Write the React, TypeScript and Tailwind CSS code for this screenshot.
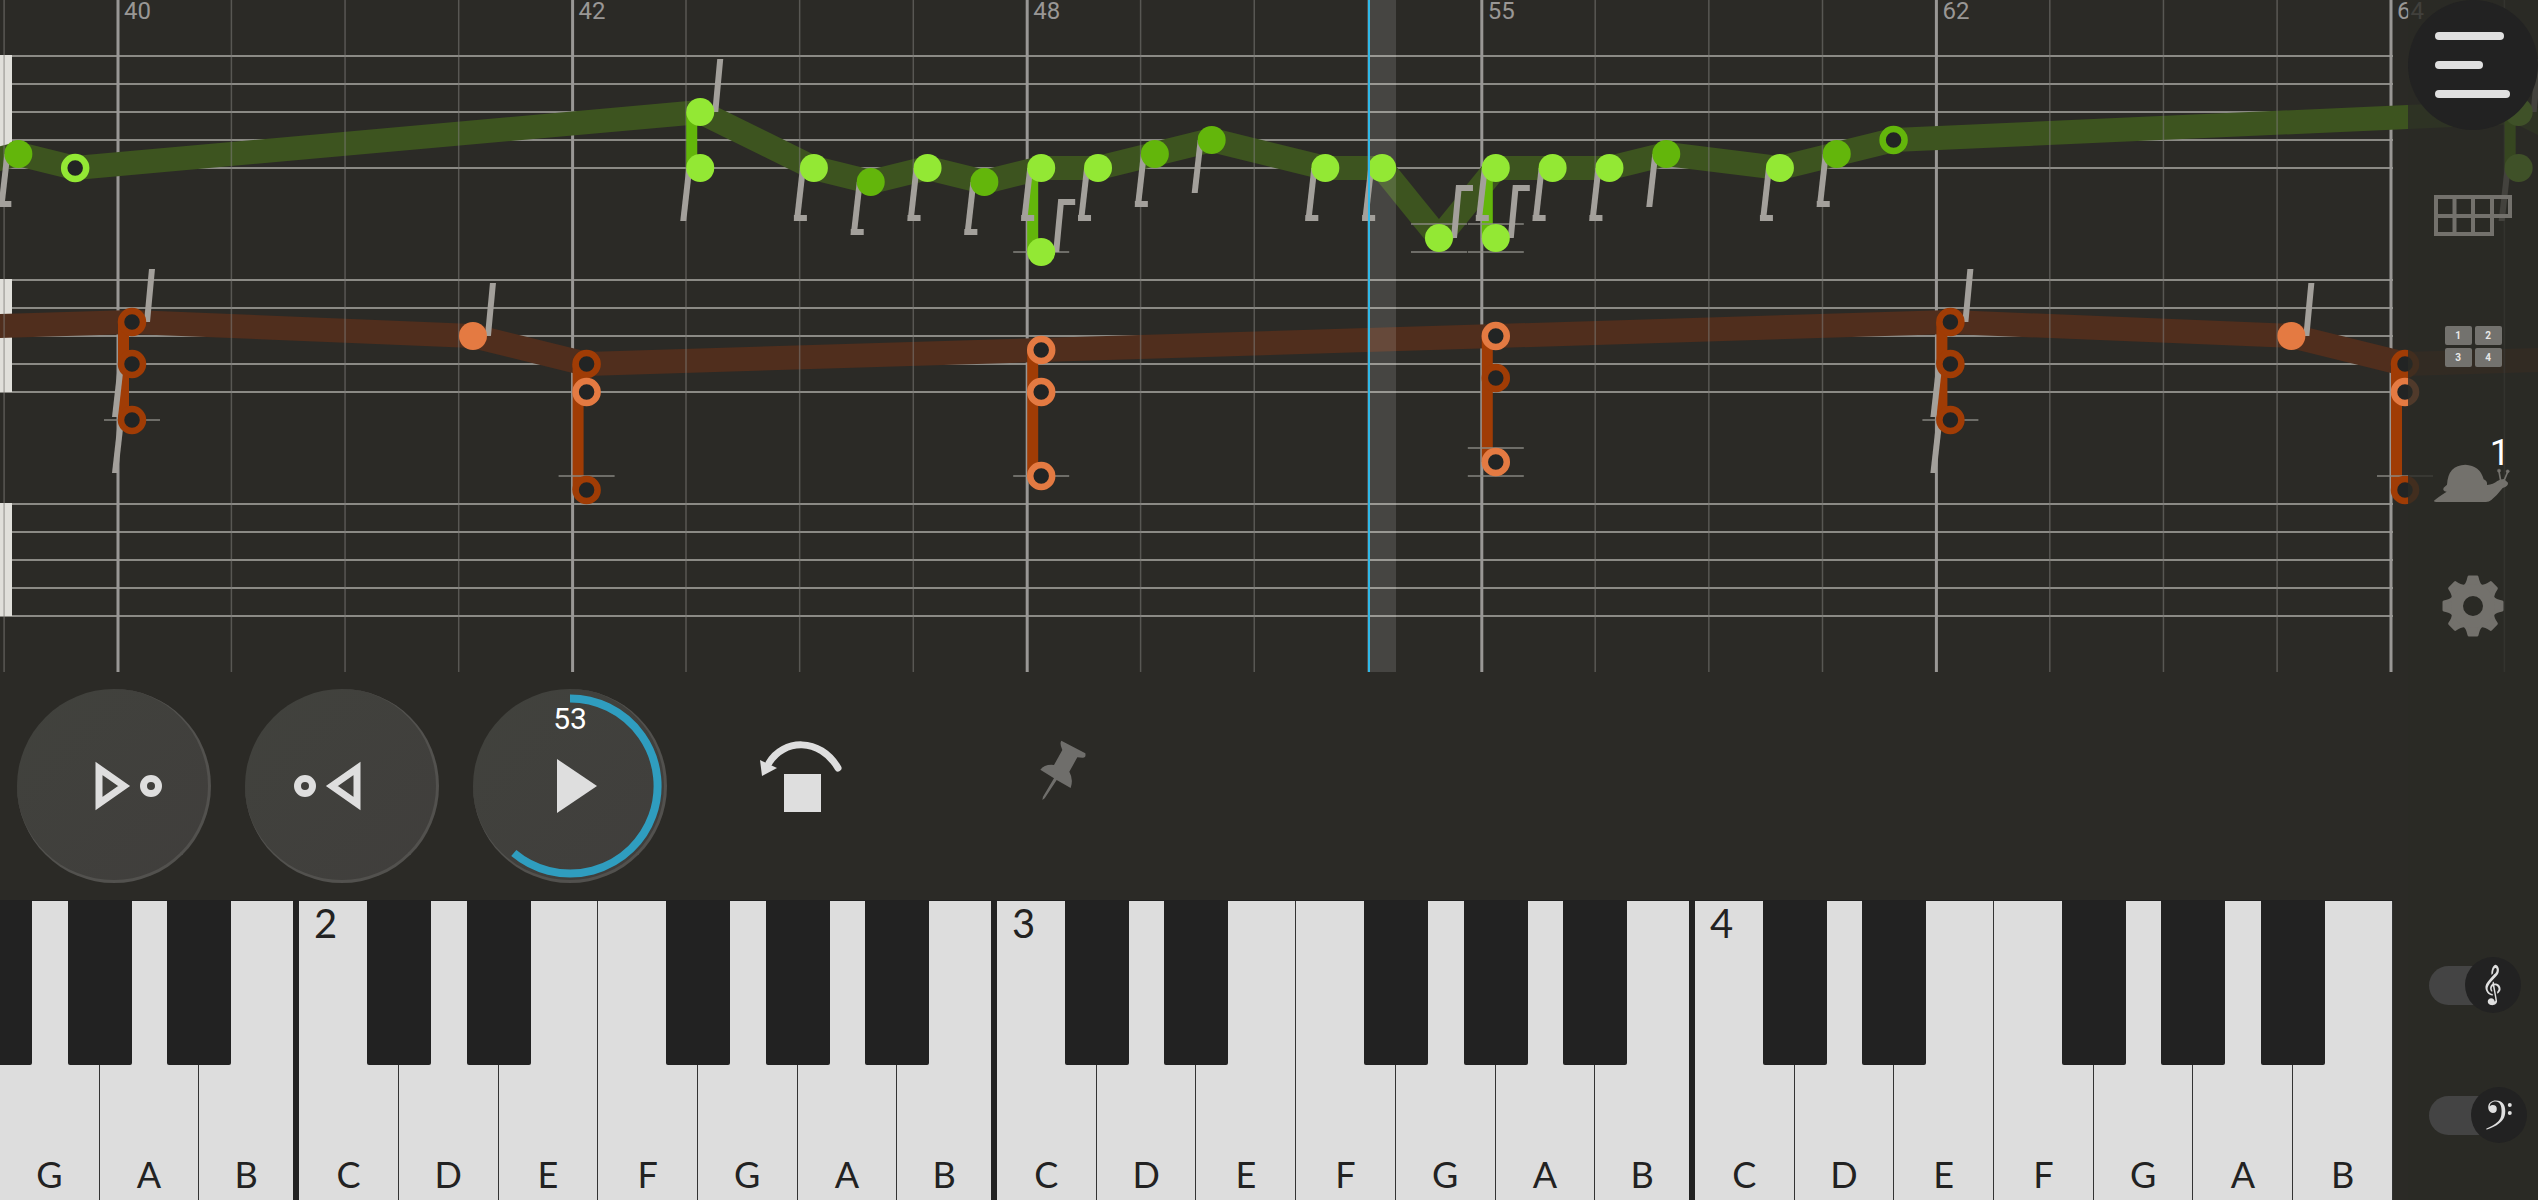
/**
 * Practice view
 *
 * Three stacked parts: the scrolling score, the transport bar and the
 * piano keyboard. The tool sidebar lies half transparent over the right edge.
 */

import { useState } from "react";
import { GiFClef, GiGClef } from "react-icons/gi";

const SCORE_HEIGHT = 672;
const FIRST_BAR = 118;
const BEAT = 113.65;
const STAFF_END = 2393;
const PLAYHEAD = 1369;

// First line of every staff, the lines are 28px apart
const STAVES = [56, 280, 504];
const STAFF_LINES = [0, 28, 56, 84, 112];

const BARS = [
  { beat: 0, label: "40" },
  { beat: 4, label: "42" },
  { beat: 8, label: "48" },
  { beat: 12, label: "55" },
  { beat: 16, label: "62" },
  { beat: 20, label: "64" },
];
const BEATS = [-1, 1, 2, 3, 5, 6, 7, 9, 10, 11, 13, 14, 15, 17, 18, 19, 21];

type Stem = "up" | "down" | "upFlag" | "downFlag";
type Note = { y: number; dark?: boolean; hollow?: boolean; stem?: Stem };
type Chord = { beat: number; notes: Note[]; ledgers?: number[] };

const GREEN = { light: "#93e834", dark: "#63b60b", ribbon: "#3d541f" };
const ORANGE = { light: "#e47a42", dark: "#a03c05", ribbon: "#502e1d" };

const RIGHT_HAND: Chord[] = [
  { beat: -1.5, notes: [{ y: 168 }] },
  { beat: -1, notes: [{ y: 154, dark: true, stem: "downFlag" }] },
  { beat: -0.5, notes: [{ y: 168, hollow: true }] },
  { beat: 5, notes: [{ y: 112, stem: "up" }, { y: 168, stem: "down" }] },
  { beat: 6, notes: [{ y: 168, stem: "downFlag" }] },
  { beat: 6.5, notes: [{ y: 182, dark: true, stem: "downFlag" }] },
  { beat: 7, notes: [{ y: 168, stem: "downFlag" }] },
  { beat: 7.5, notes: [{ y: 182, dark: true, stem: "downFlag" }] },
  { beat: 8, notes: [{ y: 168, stem: "downFlag" }, { y: 252, stem: "upFlag" }], ledgers: [252] },
  { beat: 8.5, notes: [{ y: 168, stem: "downFlag" }] },
  { beat: 9, notes: [{ y: 154, dark: true, stem: "downFlag" }] },
  { beat: 9.5, notes: [{ y: 140, dark: true, stem: "down" }] },
  { beat: 10.5, notes: [{ y: 168, stem: "downFlag" }] },
  { beat: 11, notes: [{ y: 168, stem: "downFlag" }] },
  { beat: 11.5, notes: [{ y: 238, stem: "upFlag" }], ledgers: [224, 252] },
  { beat: 12, notes: [{ y: 168, stem: "downFlag" }, { y: 238, stem: "upFlag" }], ledgers: [224, 252] },
  { beat: 12.5, notes: [{ y: 168, stem: "downFlag" }] },
  { beat: 13, notes: [{ y: 168, stem: "downFlag" }] },
  { beat: 13.5, notes: [{ y: 154, dark: true, stem: "down" }] },
  { beat: 14.5, notes: [{ y: 168, stem: "downFlag" }] },
  { beat: 15, notes: [{ y: 154, dark: true, stem: "downFlag" }] },
  { beat: 15.5, notes: [{ y: 140, dark: true, hollow: true }] },
  { beat: 21, notes: [{ y: 112, stem: "up" }, { y: 168, stem: "down" }] },
  { beat: 22, notes: [{ y: 168 }] },
];

const LEFT_HAND: Chord[] = [
  { beat: -4, notes: [{ y: 336 }] },
  {
    beat: 0,
    notes: [
      { y: 322, dark: true, hollow: true, stem: "up" },
      { y: 364, dark: true, hollow: true, stem: "down" },
      { y: 420, dark: true, hollow: true, stem: "down" },
    ],
    ledgers: [420],
  },
  { beat: 3, notes: [{ y: 336, stem: "up" }] },
  {
    beat: 4,
    notes: [
      { y: 364, dark: true, hollow: true },
      { y: 392, hollow: true },
      { y: 490, dark: true, hollow: true },
    ],
    ledgers: [476],
  },
  {
    beat: 8,
    notes: [
      { y: 350, hollow: true },
      { y: 392, hollow: true },
      { y: 476, hollow: true },
    ],
    ledgers: [476],
  },
  {
    beat: 12,
    notes: [
      { y: 336, hollow: true },
      { y: 378, dark: true, hollow: true },
      { y: 462, hollow: true },
    ],
    ledgers: [448, 476],
  },
  {
    beat: 16,
    notes: [
      { y: 322, dark: true, hollow: true, stem: "up" },
      { y: 364, dark: true, hollow: true, stem: "down" },
      { y: 420, dark: true, hollow: true, stem: "down" },
    ],
    ledgers: [420],
  },
  { beat: 19, notes: [{ y: 336, stem: "up" }] },
  {
    beat: 20,
    notes: [
      { y: 364, dark: true, hollow: true },
      { y: 392, hollow: true },
      { y: 490, dark: true, hollow: true },
    ],
    ledgers: [476],
  },
  { beat: 24, notes: [{ y: 350 }] },
];

const lineX = (beat: number) => FIRST_BAR + beat * BEAT;
const noteX = (beat: number) => lineX(beat) + 14;

// The wide band that follows the top voice
function Ribbon({ chords, color }: { chords: Chord[]; color: string }) {
  return (
    <g stroke={color} strokeWidth={24}>
      {chords.slice(1).map((chord, i) => (
        <line
          key={chord.beat}
          x1={noteX(chords[i].beat)}
          y1={chords[i].notes[0].y}
          x2={noteX(chord.beat)}
          y2={chord.notes[0].y}
        />
      ))}
    </g>
  );
}

function StemShape({ x, y, stem }: { x: number; y: number; stem: Stem }) {
  if (stem === "up" || stem === "upFlag") {
    return (
      <g fill="#a3a09b">
        <path d={`M${x + 12} ${y}h6l5 -53h-6z`} />
        {stem === "upFlag" && <rect x={x + 18} y={y - 53} width={16} height={6} />}
      </g>
    );
  }
  return (
    <g fill="#a3a09b">
      <path d={`M${x - 14} ${y}h6l-6 53h-6z`} />
      {stem === "downFlag" && <rect x={x - 20} y={y + 47} width={13} height={6} />}
    </g>
  );
}

function Voice({ chords, colors }: { chords: Chord[]; colors: typeof GREEN }) {
  return (
    <>
      {chords.map(({ beat, notes, ledgers = [] }) => {
        const x = noteX(beat);
        const top = notes[0].y;
        const bottom = notes[notes.length - 1].y;
        return (
          <g key={beat}>
            {notes.length > 1 && (
              <path d={`M${x - 14} ${top}h11v${bottom - top}h-11z`} fill={colors.dark} />
            )}
            {ledgers.map((y) => (
              <rect key={y} x={x - 28} y={y - 1} width={56} height={2} fill="#8b8a85" opacity={0.7} />
            ))}
            {notes.map((n) => n.stem && <StemShape key={n.y} x={x} y={n.y} stem={n.stem} />)}
            {notes.map((n) => {
              const color = n.dark ? colors.dark : colors.light;
              return n.hollow ? (
                <circle key={n.y} cx={x} cy={n.y} r={11} fill="#222424" stroke={color} strokeWidth={6.5} />
              ) : (
                <circle key={n.y} cx={x} cy={n.y} r={14} fill={color} />
              );
            })}
          </g>
        );
      })}
    </>
  );
}

function Score() {
  return (
    <svg className="block h-[672px] w-full shrink-0" role="img" aria-label="Score">
      {STAVES.map((top) => (
        <g key={top}>
          {STAFF_LINES.map((dy) => (
            <rect key={dy} x={0} y={top + dy - 1} width={STAFF_END} height={2} fill="#8b8a85" />
          ))}
          <rect x={0} y={top - 1} width={12} height={113} fill="#e0dfda" />
        </g>
      ))}

      {BARS.map((bar) => (
        <g key={bar.beat}>
          <rect x={lineX(bar.beat) - 1.5} y={0} width={3} height={SCORE_HEIGHT} fill="#999795" />
          <text x={lineX(bar.beat) + 6} y={19} fontSize={24} fill="#999795">
            {bar.label}
          </text>
        </g>
      ))}

      <Ribbon chords={RIGHT_HAND} color={GREEN.ribbon} />
      <Ribbon chords={LEFT_HAND} color={ORANGE.ribbon} />

      {BEATS.map((beat) => (
        <rect key={beat} x={lineX(beat) - 1} y={0} width={1.5} height={SCORE_HEIGHT} fill="#7d7c78" opacity={0.55} />
      ))}

      <rect x={PLAYHEAD} y={0} width={27} height={SCORE_HEIGHT} fill="#ffffff" opacity={0.13} />

      <Voice chords={RIGHT_HAND} colors={GREEN} />
      <Voice chords={LEFT_HAND} colors={ORANGE} />

      <rect x={PLAYHEAD - 1} y={0} width={2} height={SCORE_HEIGHT} fill="#2fb9e8" />
    </svg>
  );
}

const roundButton =
  "size-[194px] shrink-0 rounded-full border-r-3 border-b-3 border-[#52514e] bg-linear-to-br from-[#41423d] to-[#403e3c]";

function Transport() {
  return (
    <div className="flex h-[228px] shrink-0 items-center gap-[34px] pl-[17px]">
      <button className={roundButton} aria-label="Step forward">
        <svg viewBox="0 0 194 194" className="size-[194px]" fill="none" stroke="#dedede" strokeWidth={7}>
          <path d="M82 79.5v35L107 97z" />
          <circle cx={134} cy={97} r={7.5} />
        </svg>
      </button>

      <button className={roundButton} aria-label="Step back">
        <svg viewBox="0 0 194 194" className="size-[194px]" fill="none" stroke="#dedede" strokeWidth={7}>
          <path d="M112 79.5v35L87 97z" />
          <circle cx={60} cy={97} r={7.5} />
        </svg>
      </button>

      <button className={`${roundButton} relative`} aria-label="Play from bar 53">
        <svg viewBox="0 0 194 194" className="size-[194px]" fill="none">
          {/* How far the piece has come */}
          <path d="M97 9.5A87.5 87.5 0 1 1 40.8 164" stroke="#2f9dbf" strokeWidth={8} />
          <path d="M84 70v54L124 97z" fill="#dedede" />
        </svg>
        <span className="absolute top-[15px] -right-[3px] left-0 text-center text-[30px] leading-[30px] text-white">
          53
        </span>
      </button>

      <button className="shrink-0" aria-label="Loop">
        <svg viewBox="0 0 194 194" className="size-[194px]">
          <path d="M68 74C82 50 119 48 137 79" fill="none" stroke="#dedede" strokeWidth={7} strokeLinecap="round" />
          <path d="M59 71l17 8-15 8z" fill="#dedede" />
          <rect x={83} y={85} width={37} height={38} fill="#dedede" />
        </svg>
      </button>

      <button className="ml-9 shrink-0" aria-label="Pin">
        <svg viewBox="797 -33 582 582" className="size-[194px]" fill="#6f6e6b">
          <path d="M1086 122L1158 160Q1161 174 1149 173L1134 172L1110 215Q1123 238 1114 264L1072 240L1036 295L1029 300L1031 290L1064 235L1023 209Q1036 192 1064 195L1089 150Q1080 130 1086 122Z" />
        </svg>
      </button>
    </div>
  );
}

// Visible range of the keyboard, starts on a G
const KEYS = "GABCDEFGABCDEFGABCDEFGAB".split("");
const OCTAVES = ["2", "3", "4"];
// White keys that have a black key on their left edge
const SHARP_BEFORE = "GABDE";

function Keyboard() {
  return (
    <div className="mr-[145px] flex min-h-[300px] flex-1 overflow-hidden border-t border-[#222222] bg-[#222222] font-[Lato,sans-serif]">
      {KEYS.map((name, i) => {
        const octave = name === "C" ? OCTAVES[Math.floor(i / 7)] : null;
        return (
          <div key={i} className="relative flex min-w-0 flex-1">
            <button
              className={`flex flex-1 flex-col items-center justify-end bg-[#dddddd] pb-1 text-[36px] leading-[44px] text-[#222222] ${
                name === "B" && i < 23 ? "border-r-6 border-[#222222]" : "border-r border-[#333333]"
              }`}
            >
              {octave && (
                <span className="mb-auto self-start pl-[15px] text-[40px] leading-[44px]">{octave}</span>
              )}
              {name}
            </button>
            {SHARP_BEFORE.includes(name) && (
              <button
                className="absolute top-0 -left-8 z-10 h-[55%] w-16 rounded-b-xs bg-[#222222]"
                aria-label={`${name} flat`}
              />
            )}
          </div>
        );
      })}
    </div>
  );
}

const sideButton = "flex size-[130px] shrink-0 items-center justify-center";
const TEETH = [0, 45, 90, 135, 180, 225, 270, 315];

function Sidebar() {
  const [treble, setTreble] = useState(true);
  const [bass, setBass] = useState(true);

  return (
    <div className="absolute inset-y-0 right-0 z-20 flex w-[130px] flex-col bg-[#2b2a26]/80 pb-5">
      <button className="mb-[21px] flex size-[130px] shrink-0 flex-col justify-center gap-[21px] rounded-full bg-[#222222] pl-[27px]" aria-label="Menu">
        <span className="h-2 w-[69px] rounded-full bg-[#e0e0e0]" />
        <span className="h-2 w-12 rounded-full bg-[#e0e0e0]" />
        <span className="h-2 w-[75px] rounded-full bg-[#e0e0e0]" />
      </button>

      <button className={sideButton} aria-label="Grid">
        <svg viewBox="0 0 78 42" className="h-[42px] w-[78px]" fill="none" stroke="#73716c" strokeWidth={4}>
          <path d="M2 2h74v19H2zM2 21v18h56V2M20.5 2v37M39 2v37" />
        </svg>
      </button>

      <button className={sideButton} aria-label="Sections">
        <span className="grid grid-cols-2 gap-x-[3px] gap-y-[3px] text-[10px] leading-[19px] font-bold text-[#e8e8e8]">
          {["1", "2", "3", "4"].map((n) => (
            <span key={n} className="w-[27px] rounded-xs bg-[#73726e]">{n}</span>
          ))}
        </span>
      </button>

      <button className={`${sideButton} relative`} aria-label="Speed">
        <svg viewBox="84 753 390 390" className="size-[130px]" fill="#73716c" stroke="#73716c">
          <path
            stroke="none"
            d="M162 1022Q176 1010 200 995Q186 992 191 983L201 974Q204 915 256 914Q300 916 311 958Q323 963 321 975Q340 973 352 963Q362 957 372 957L384 968Q386 978 368 984Q352 1005 334 1020Q327 1026 318 1026L168 1026Q160 1025 162 1022Z"
          />
          <path d="M357 934L362 962M383 936L372 962" strokeWidth={5} />
          <circle cx={357} cy={932} r={5} />
          <circle cx={383} cy={934} r={5} />
        </svg>
        <span className="absolute top-6 right-7 text-[36px] leading-9 text-white">1</span>
      </button>

      <button className={sideButton} aria-label="Settings">
        <svg viewBox="-32 -32 64 64" className="size-16" fill="#73716c" stroke="#73716c" strokeLinejoin="round">
          {TEETH.map((angle) => (
            <path key={angle} d="M-8 -20Q-5.5 -22 -4 -29H4Q5.5 -22 8 -20z" strokeWidth={3} transform={`rotate(${angle})`} />
          ))}
          <circle r={16} fill="none" strokeWidth={12} />
        </svg>
      </button>

      <label className="mt-auto flex h-[130px] shrink-0 items-center pl-[21px]">
        <input
          type="checkbox"
          aria-label="Treble clef"
          checked={treble}
          onChange={() => setTreble(!treble)}
          className="h-[39px] w-16 appearance-none rounded-full bg-[#444444]"
        />
        <span className="-ml-7 flex size-14 items-center justify-center rounded-full bg-[#222222]">
          <GiGClef className="size-11 text-[#e0e0e0]" />
        </span>
      </label>

      <label className="flex h-[130px] shrink-0 items-center pl-[21px]">
        <input
          type="checkbox"
          aria-label="Bass clef"
          checked={bass}
          onChange={() => setBass(!bass)}
          className="h-[39px] w-[70px] appearance-none rounded-full bg-[#444444]"
        />
        <span className="-ml-7 flex size-14 items-center justify-center rounded-full bg-[#222222]">
          <GiFClef className="size-8 text-[#e0e0e0]" />
        </span>
      </label>
    </div>
  );
}

export default function App() {
  return (
    <div className="relative flex min-h-screen flex-col overflow-hidden bg-[#2b2a26] font-[Roboto,sans-serif]">
      <Score />
      <Transport />
      <Keyboard />
      <Sidebar />
    </div>
  );
}
